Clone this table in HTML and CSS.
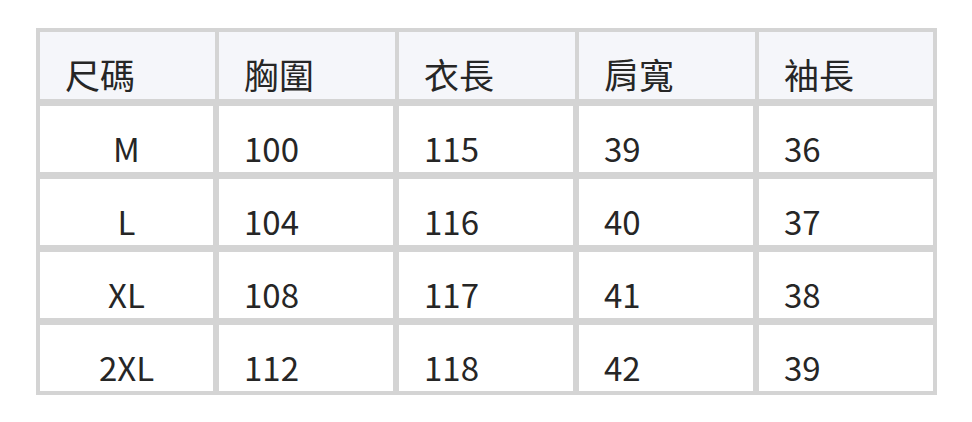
FILE: index.html
```html
<!DOCTYPE html>
<html lang="zh-Hant">
<head>
<meta charset="utf-8">
<title>尺碼表</title>
<link rel="stylesheet" href="styles.css">
</head>
<body>
<div class="size-table">
  <div class="cell head">尺碼</div>
  <div class="cell head">胸圍</div>
  <div class="cell head">衣長</div>
  <div class="cell head">肩寬</div>
  <div class="cell head">袖長</div>

  <div class="cell body first">M</div>
  <div class="cell body">100</div>
  <div class="cell body">115</div>
  <div class="cell body">39</div>
  <div class="cell body last">36</div>

  <div class="cell body first">L</div>
  <div class="cell body">104</div>
  <div class="cell body">116</div>
  <div class="cell body">40</div>
  <div class="cell body last">37</div>

  <div class="cell body first">XL</div>
  <div class="cell body">108</div>
  <div class="cell body">117</div>
  <div class="cell body">41</div>
  <div class="cell body last">38</div>

  <div class="cell body first">2XL</div>
  <div class="cell body">112</div>
  <div class="cell body">118</div>
  <div class="cell body">42</div>
  <div class="cell body last">39</div>
</div>
</body>
</html>
```

FILE: styles.css
```css
html, body {
  margin: 0;
  padding: 0;
  background: #ffffff;
}

body {
  padding: 28px 0 0 36px;
  font-family: "Noto Sans CJK TC", "Noto Sans", sans-serif;
  color: #262626;
}

.size-table {
  display: grid;
  grid-template-columns: 175px 176px 176px 176px 174px;
  grid-template-rows: 67px 66px 66px 66px 66px;
  column-gap: 4px;
  row-gap: 7px;
  padding: 4px;
  width: max-content;
  background: #d4d4d4;
}

.cell {
  display: flex;
  align-items: flex-end;
  font-size: 33px;
  line-height: 48px;
  padding-left: 25px;
  box-sizing: border-box;
}

.head {
  background: #f5f6fa;
  font-size: 35px;
  line-height: 50px;
  padding-bottom: 0;
}

.body {
  background: #ffffff;
  border-right: 2px solid #d4d4d4;
  padding-bottom: 0;
}

.body.first {
  justify-content: center;
  padding-left: 0;
}

.body.last {
  border-right: 0;
}
```
